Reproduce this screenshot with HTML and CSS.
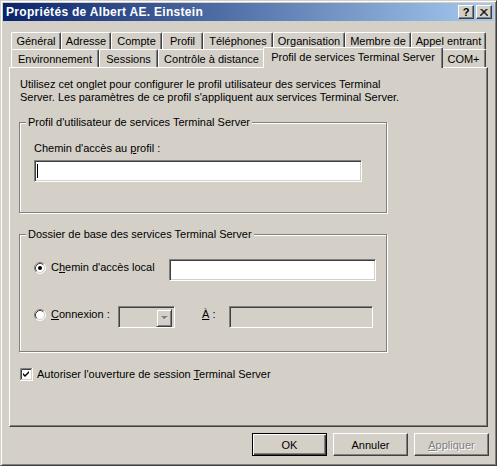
FILE: index.html
```html
<!DOCTYPE html>
<html lang="fr">
<head>
  <meta charset="UTF-8" />
  <title>Propriétés de Albert AE. Einstein</title>
  <link rel="stylesheet" href="styles.css">
</head>
<body>
  <div class="window">
    <div class="titlebar">
      <span class="title">Propriétés de Albert AE. Einstein</span>
      <div class="caption-buttons">
        <span class="cbtn help">?</span>
        <span class="cbtn">
          <svg width="8" height="7" viewBox="0 0 8 7"><path d="M0.5 0 L7.5 7 M1.5 0 L8.5 7 M7.5 0 L0.5 7 M6.5 0 L-0.5 7" stroke="#000" stroke-width="1" fill="none"/></svg>
        </span>
      </div>
    </div>

    <div class="tabs">
      <div class="tab-row row1">
        <div class="tab">Général</div>
        <div class="tab">Adresse</div>
        <div class="tab">Compte</div>
        <div class="tab">Profil</div>
        <div class="tab">Téléphones</div>
        <div class="tab">Organisation</div>
        <div class="tab">Membre de</div>
        <div class="tab">Appel entrant</div>
      </div>
      <div class="tab-row row2">
        <div class="tab">Environnement</div>
        <div class="tab">Sessions</div>
        <div class="tab">Contrôle à distance</div>
        <div class="tab active">Profil de services Terminal Server</div>
        <div class="tab">COM+</div>
      </div>
    </div>

    <div class="panel">
      <p class="desc">Utilisez cet onglet pour configurer le profil utilisateur des services Terminal<br>Server. Les paramètres de ce profil s'appliquent aux services Terminal Server.</p>

      <div class="group group-profile">
        <span class="group-title">Profil d'utilisateur de services Terminal Server</span>
        <div class="field-label">Chemin d'accès au <u>p</u>rofil :</div>
        <div class="edit edit-profile"><span class="caret"></span></div>
      </div>

      <div class="group group-home">
        <span class="group-title">Dossier de base des services Terminal Server</span>
        <div class="option">
          <svg class="radio" width="12" height="12" viewBox="0 0 12 12">
            <circle cx="6" cy="6" r="5" fill="#fff"/>
            <path d="M2.11 9.89 A5.5 5.5 0 0 1 9.89 2.11" stroke="#808080" fill="none"/>
            <path d="M9.89 2.11 A5.5 5.5 0 0 1 2.11 9.89" stroke="#fff" fill="none"/>
            <path d="M2.82 9.18 A4.5 4.5 0 0 1 9.18 2.82" stroke="#404040" fill="none"/>
            <path d="M9.18 2.82 A4.5 4.5 0 0 1 2.82 9.18" stroke="#d4d0c8" fill="none"/>
            <circle cx="6" cy="6" r="2" fill="#000"/>
          </svg>
          <span class="opt-label local">C<u>h</u>emin d'accès local</span>
          <div class="edit edit-local"></div>
        </div>
        <div class="option">
          <svg class="radio" width="12" height="12" viewBox="0 0 12 12">
            <circle cx="6" cy="6" r="5" fill="#fff"/>
            <path d="M2.11 9.89 A5.5 5.5 0 0 1 9.89 2.11" stroke="#808080" fill="none"/>
            <path d="M9.89 2.11 A5.5 5.5 0 0 1 2.11 9.89" stroke="#fff" fill="none"/>
            <path d="M2.82 9.18 A4.5 4.5 0 0 1 9.18 2.82" stroke="#404040" fill="none"/>
            <path d="M9.18 2.82 A4.5 4.5 0 0 1 2.82 9.18" stroke="#d4d0c8" fill="none"/>
          </svg>
          <span class="opt-label connect"><u>C</u>onnexion :</span>
          <div class="edit combo disabled">
            <span class="combo-btn">
              <svg width="7" height="5" viewBox="0 0 7 5"><path d="M1 1 H7 L4 4 Z" fill="#fff"/><path d="M0 0 H7 L3.5 3.5 Z" fill="#808080"/></svg>
            </span>
          </div>
          <span class="opt-label to"><u>À</u> :</span>
          <div class="edit edit-to disabled"></div>
        </div>
      </div>

      <div class="check-row">
        <svg class="check" width="13" height="13" viewBox="0 0 13 13">
          <rect x="0" y="0" width="13" height="13" fill="#fff"/>
          <path d="M0.5 12 V0.5 H12" stroke="#808080" fill="none"/>
          <path d="M1.5 11 V1.5 H11" stroke="#404040" fill="none"/>
          <path d="M1 11.5 H11.5 V1" stroke="#d4d0c8" fill="none"/>
          <path d="M0 12.5 H12.5 V0" stroke="#fff" fill="none"/>
          <path d="M3 5 L5 7 L9 3 V5 L5 9 L3 7 Z" fill="#000"/>
        </svg>
        <span>Autoriser l'ouverture de session <u>T</u>erminal Server</span>
      </div>
    </div>

    <div class="buttons">
      <button class="btn default">OK</button>
      <button class="btn">Annuler</button>
      <button class="btn disabled"><u>A</u>ppliquer</button>
    </div>
  </div>
</body>
</html>
```

FILE: styles.css
```css
* { box-sizing: border-box; }
body { margin: 0; background: #d4d0c8; font-family: "Liberation Sans", Arial, sans-serif; font-size: 11px; color: #000; }
u { text-decoration: underline; text-underline-offset: 1px; }

.window { width: 497px; height: 466px; background: #d4d0c8; border: 1px solid; border-color: #d4d0c8 #404040 #404040 #d4d0c8; box-shadow: inset 1px 1px #fff, inset -1px -1px #808080; padding: 2px; display: flex; flex-direction: column; }

.titlebar { height: 18px; display: flex; align-items: center; padding-left: 3px; background: linear-gradient(to right, #0a246a, #a6caf0); }
.title { color: #fff; font-weight: bold; font-size: 12px; letter-spacing: 0.3px; white-space: nowrap; }
.caption-buttons { margin-left: auto; margin-right: 2px; display: flex; gap: 2px; }
.cbtn { width: 16px; height: 14px; background: #d4d0c8; border: 1px solid; border-color: #fff #404040 #404040 #fff; box-shadow: inset -1px -1px #808080; display: flex; align-items: center; justify-content: center; }
.cbtn.help { font-weight: bold; font-size: 11px; line-height: 12px; }

.tabs { margin: 11px 0 0 8px; width: 475px; }
.tab-row { display: grid; }
.row1 { grid-template-columns: 50px 50px 51px 41px 70px 72px 66px 75px; height: 17px; }
.row2 { grid-template-columns: 88px 59px 107px 176px 45px; height: 18px; }
.tab { border-left: 1px solid #fff; border-top: 1px solid #fff; border-right: 1px solid #404040; box-shadow: inset -1px 0 #808080; border-radius: 2px 2px 0 0; background: #d4d0c8; display: flex; align-items: center; justify-content: center; white-space: nowrap; }
.tab.active { margin: -2px -2px -1px; z-index: 1; padding-bottom: 2px; }

.panel { margin: 0 6px; height: 360px; border: 1px solid; border-color: #fff #404040 #404040 #fff; box-shadow: inset -1px -1px #808080; padding: 10px 0 0 9px; }
.desc { margin: 0 0 0 1px; line-height: 13px; white-space: nowrap; }

.group { width: 368px; border: 1px solid #808080; box-shadow: 1px 1px #fff, inset 1px 1px #fff; padding-left: 14px; }
.group-title { display: table; margin: -7px 0 0 -8px; padding: 0 2px; line-height: 13px; background: #d4d0c8; white-space: nowrap; }
.group-profile { margin-top: 18px; padding-bottom: 30px; }
.group-home { margin-top: 21px; padding-bottom: 23px; }

.field-label { margin-top: 13px; line-height: 13px; }
.edit { height: 22px; background: #fff; border: 1px solid; border-color: #808080 #fff #fff #808080; box-shadow: inset 1px 1px #404040, inset -1px -1px #d4d0c8; }
.edit.disabled { background: #d4d0c8; }
.edit-profile { margin-top: 5px; width: 328px; padding: 3px 0 0 2px; }
.caret { display: block; width: 1px; height: 14px; background: #000; }

.option { display: flex; align-items: flex-start; height: 22px; }
.option + .option { margin-top: 25px; }
.group-home .option:first-of-type { margin-top: 18px; }
.radio { margin-top: 3px; flex: none; }
.opt-label { line-height: 13px; margin-top: 2px; white-space: nowrap; }
.local { margin-left: 5px; width: 118px; }
.connect { margin-left: 5px; width: 67px; }
.to { margin-left: 27px; width: 27px; }
.edit-local { width: 207px; }
.edit-to { width: 144px; }

.combo { width: 57px; padding: 2px; display: flex; justify-content: flex-end; }
.combo-btn { width: 16px; height: 18px; border: 1px solid; border-color: #d4d0c8 #404040 #404040 #d4d0c8; box-shadow: inset 1px 1px #fff, inset -1px -1px #808080; display: flex; align-items: center; justify-content: center; }

.check-row { margin: 16px 0 0 1px; display: flex; align-items: center; gap: 4px; line-height: 13px; }
.check { flex: none; }

.buttons { margin: 6px 5px 0 0; display: flex; justify-content: flex-end; gap: 6px; }
.btn { width: 75px; height: 23px; padding: 0; font-family: inherit; font-size: 11px; color: #000; background: #d4d0c8; border: 1px solid; border-color: #fff #404040 #404040 #fff; box-shadow: inset -1px -1px #808080; }
.btn.default { border-color: #000; box-shadow: inset 1px 1px #fff, inset -1px -1px #404040, inset -2px -2px #808080; }
.btn.disabled { color: #808080; text-shadow: 1px 1px #fff; }
```
